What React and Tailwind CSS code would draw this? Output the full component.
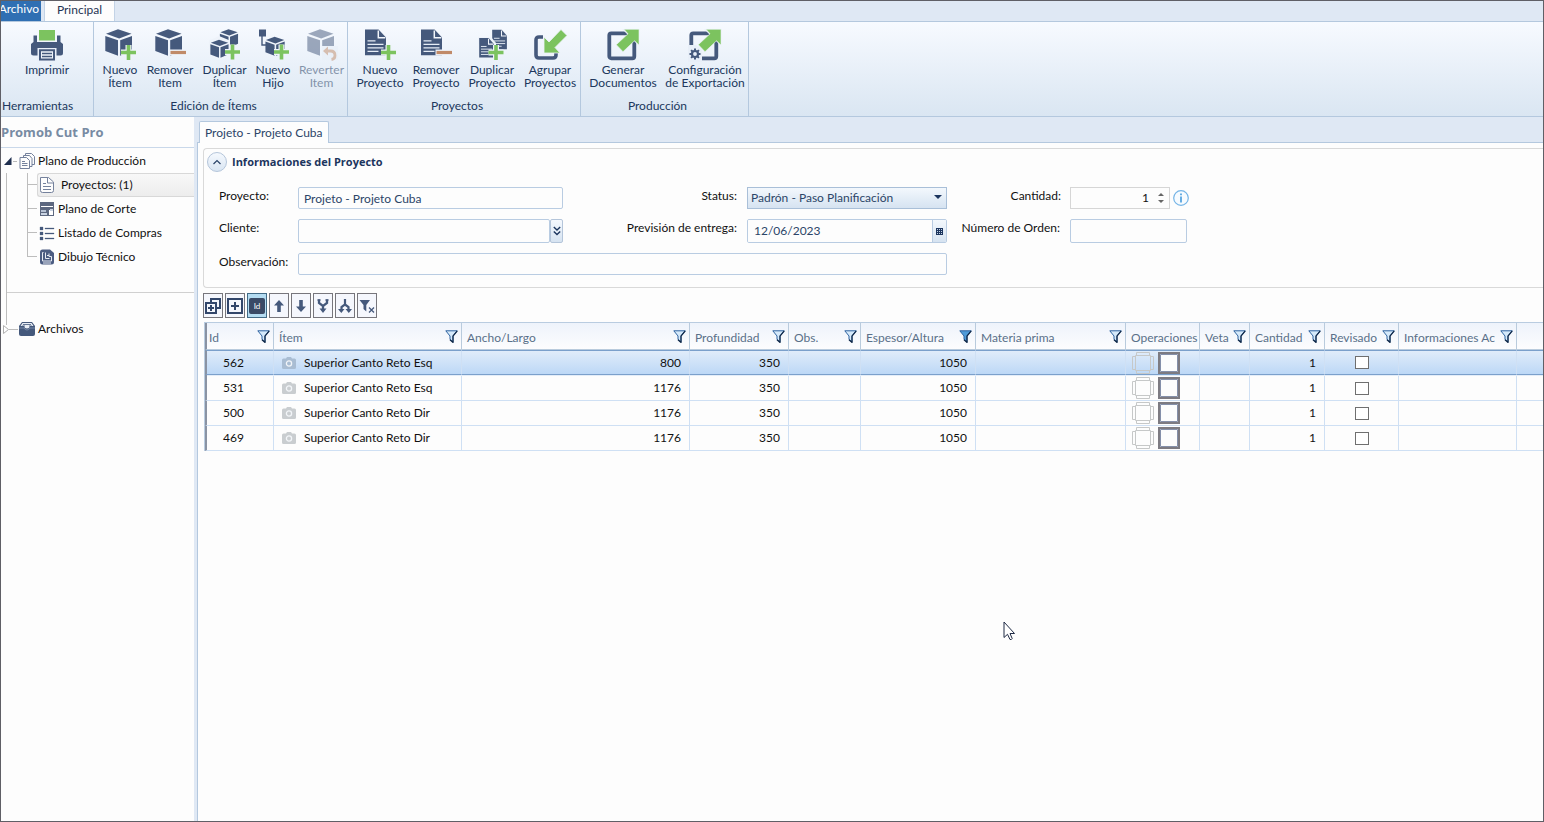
import React from "react";

const NAVY = "#45597c";
const GREEN = "#7cc35f";
const BROWN = "#c08a68";

/* ---------- ribbon drawings ---------- */

function Plus({ x = 24.5, y = 23.5 }) {
  const d = `M${x - 7.5} ${y}h15M${x} ${y - 7.5}v15`;
  return (
    <>
      <path d={d} stroke="#eef3fa" strokeWidth="6" fill="none" />
      <path d={d} stroke={GREEN} strokeWidth="3.6" fill="none" />
    </>
  );
}

function Minus() {
  return (
    <>
      <path d="M15.5 23.5h17" stroke="#eef3fa" strokeWidth="6" />
      <path d="M16.5 23.5h15.5" stroke={BROWN} strokeWidth="3.2" />
    </>
  );
}

function Cube({ transform }) {
  return (
    <g transform={transform} fill={NAVY}>
      <path d="M2 4.8 14 .3l13.5 4.5L15.2 9.6z" />
      <path d="M1.3 7 14 11.3v15.4L1.3 21.9z" />
      <path d="M16.2 11.3 28 7v14.7l-11.8 5z" />
    </g>
  );
}

function Sheet({ transform }) {
  return (
    <g transform={transform}>
      <path d="M1 .5h13.5L22 8.5v17.7H1z" fill={NAVY} />
      <path d="M14.3 1.5v7.3h7" fill="none" stroke="#f2f6fb" strokeWidth="1.5" />
      <path d="M3.5 11.8h8M3.5 15.3h16M3.5 18.8h16M3.5 22.3h11" stroke="#e6edf6" strokeWidth="1.3" />
    </g>
  );
}

const outArrow = <path d="M17 .3h15v15.700l-4.500-4.200L16 22.700 9.300 15.700 21 4.800z" fill={GREEN} stroke="#eef3fa" strokeWidth=".6" />;

const drawings = {
  print: (
    <>
      <path d="M8 1h16v10.5H8z" fill={GREEN} />
      <path d="M2.5 6.5H6v6.5h20V6.5h3.5V13l2.5 2v9q0 2.5-2.5 2.5h-27Q0 26.500 0 24v-9l2.500-2z" fill={NAVY} />
      <path d="M6.500 19h19v13h-19z" fill="#e8eff8" />
      <path d="M9 21.300h14v9.200H9z" fill="#eef3fa" stroke={NAVY} strokeWidth="2" />
      <path d="M11 24.500h10M11 27.500h10" stroke={NAVY} strokeWidth="1.300" />
    </>
  ),
  itemNew: (<><Cube /><Plus /></>),
  itemRemove: (<><Cube /><Minus /></>),
  itemDup: (
    <>
      <Cube transform="translate(10 0) scale(.68)" />
      <path d="M0 11.500 10 7l11 4.500V28L10 31 0 27z" fill="#eef3fa" />
      <Cube transform="translate(.5 10.500) scale(.68)" />
      <Plus x={23.500} y={23} />
    </>
  ),
  itemChild: (
    <>
      <path d="M2 .5h7v7H2z" fill={NAVY} />
      <path d="M5 7v9h5" fill="none" stroke={NAVY} strokeWidth="1.400" />
      <Cube transform="translate(7.500 7.500) scale(.72)" />
      <Plus x={24.500} y={23} />
    </>
  ),
  itemRevert: (
    <>
      <Cube />
      <path d="M16 17h16v14H16z" fill="#e8eff8" />
      <path d="M20 22h4.500q4.500 0 4.500 4.500 0 3.500-3.500 4" fill="none" stroke={BROWN} strokeWidth="2.800" />
      <path d="m22 17.500-5 4.500 5 4.500z" fill={BROWN} />
    </>
  ),
  projNew: (<><Sheet /><Plus /></>),
  projRemove: (<><Sheet /><Minus /></>),
  projDup: (
    <>
      <Sheet transform="translate(15.500 .3) scale(.7 .76)" />
      <path d="M2 8h13l5 6v15H2z" fill="#eef3fa" />
      <Sheet transform="translate(2.500 8.500) scale(.7 .76)" />
      <Plus x={20} y={23.500} />
    </>
  ),
  projGroup: (
    <>
      <path d="M9 8H5Q2 8 2 11v15q0 3 3 3h14q3 0 3-3v-4" fill="none" stroke={NAVY} strokeWidth="3.600" />
      <path d="m10 8 5 5L27 .5l6 6-12 12 5 5.500H10z" fill={GREEN} stroke="#eef3fa" strokeWidth=".8" />
    </>
  ),
  generate: (
    <>
      <rect x="2.300" y="4.300" width="25" height="25" rx="2" fill="none" stroke={NAVY} strokeWidth="3.800" />
      <path d="M15 0h18v18z" fill="#eef3fa" />
      {outArrow}
    </>
  ),
  exportCfg: (
    <>
      <rect x="2.300" y="4.300" width="25" height="25" rx="2" fill="none" stroke={NAVY} strokeWidth="3.800" />
      <path d="M15 0h18v18z" fill="#eef3fa" />
      <path d="M-1 16h8l6 5v12H-1z" fill="#e8eff8" />
      {outArrow}
      <circle cx="6" cy="25" r="3" fill="none" stroke={NAVY} strokeWidth="2.200" />
      <path d="M6 19.500v2M6 28.500v2M.5 25h2M9.500 25h2M2.100 21.100l1.500 1.500M8.400 27.400l1.500 1.500M2.100 28.900l1.500-1.500M8.400 22.600l1.500-1.500" stroke={NAVY} strokeWidth="2" />
    </>
  ),
};

function RibbonButton({ icon, lines, width, disabled }) {
  return (
    <button type="button" disabled={disabled} className={`${width} flex shrink-0 flex-col items-center gap-[2px] leading-[13px] ${disabled ? "opacity-50" : ""}`}>
      <svg viewBox="0 0 32 32" className="h-8 w-8 overflow-visible" aria-hidden="true">{drawings[icon]}</svg>
      <span className="whitespace-nowrap">
        {lines.map((l) => <span key={l} className="block">{l}</span>)}
      </span>
    </button>
  );
}

const ribbon = [
  { name: "Herramientas", width: "w-[93px]", pad: "", label: "pl-px text-left", items: [{ icon: "print", lines: ["Imprimir"], width: "w-[92px]" }] },
  {
    name: "Edición de Ítems", width: "w-[254px]", pad: "pl-1", label: "pr-[14px] text-center",
    items: [
      { icon: "itemNew", lines: ["Nuevo", "Ítem"], width: "w-[44px]" },
      { icon: "itemRemove", lines: ["Remover", "Item"], width: "w-[56px]" },
      { icon: "itemDup", lines: ["Duplicar", "Ítem"], width: "w-[53px]" },
      { icon: "itemChild", lines: ["Nuevo", "Hijo"], width: "w-[44px]" },
      { icon: "itemRevert", lines: ["Reverter", "Item"], width: "w-[53px]", disabled: true },
    ],
  },
  {
    name: "Proyectos", width: "w-[233px]", pad: "pl-1", label: "pr-[14px] text-center",
    items: [
      { icon: "projNew", lines: ["Nuevo", "Proyecto"], width: "w-[56px]" },
      { icon: "projRemove", lines: ["Remover", "Proyecto"], width: "w-[56px]" },
      { icon: "projDup", lines: ["Duplicar", "Proyecto"], width: "w-[56px]" },
      { icon: "projGroup", lines: ["Agrupar", "Proyectos"], width: "w-[60px]" },
    ],
  },
  {
    name: "Producción", width: "w-[168px]", pad: "pl-1", label: "pr-[14px] text-center",
    items: [
      { icon: "generate", lines: ["Generar", "Documentos"], width: "w-[76px]" },
      { icon: "exportCfg", lines: ["Configuración", "de Exportación"], width: "w-[88px]" },
    ],
  },
];

function Ribbon() {
  return (
    <header>
      <nav className="flex h-[20px] bg-[#dfe8f4] leading-4">
        <button type="button" className="flex w-[40px] justify-end overflow-hidden bg-[#2f6fb3] pr-[2px] text-white">Archivo</button>
        <button type="button" className="ml-[3px] w-[71px] border-x border-[#c3d3e6] bg-[#fdfdfd] pb-[3px] text-[#1f3352]">Principal</button>
      </nav>
      <div className="flex h-[96px] border-y border-[#b4c8de] bg-linear-to-b from-[#f7faff] to-[#dae6f2] text-[#20375c]">
        {ribbon.map((g) => (
          <section key={g.name} className={`${g.width} flex shrink-0 flex-col border-r border-[#b4c8de] pt-[7px]`}>
            <div className={`${g.pad} flex h-[69px] items-start`}>{g.items.map((b) => <RibbonButton key={b.icon} {...b} />)}</div>
            <h2 className={`${g.label} leading-4`}>{g.name}</h2>
          </section>
        ))}
      </div>
    </header>
  );
}

/* ---------- navigation tree ---------- */

const treeIcons = {
  stack: (
    <g fill="#fdfdfd" stroke="#74819c" strokeWidth="1">
      <path d="M6.500.5h6l3 3v8h-9z" />
      <path d="M4.500 2.500h6l2.500 3v8H4.500z" />
      <path d="M1 4.500h6.500l3 3v8H1z" />
      <path d="M3 8.500h3M3 10.500h5.500M3 12.500h5.500" />
    </g>
  ),
  sheet: (
    <g fill="#fdfdfd" stroke="#74819c" strokeWidth="1">
      <path d="M1.500.5h8l5 4.500v8.500q0 2-2 2h-9q-2 0-2-2z" />
      <path d="M8.500.5V6h6M4 6.500h3M4 9.500h8M4 12.500h8" />
    </g>
  ),
  cut: (
    <>
      <path d="M1 1h14v14H1z" fill="#5d6880" />
      <path d="M2 5h12v1H2zM8 9h6v5h-4V9z" fill="#fff" />
      <path d="M2 9h5v2H2z" fill="#b7c2d4" />
      <path d="M2 12h6v2H2zM11 8h3v2h-3z" fill="#c9d3e2" />
      <path d="M9 8v6" stroke="#5d6880" />
    </>
  ),
  list: <path d="M1 2h3v3H1zM1 7h3v3H1zM1 12h3v3H1zM6 3h9v1H6zM6 8h9v1H6zM6 13h9v1H6z" fill="#45597c" stroke="#45597c" strokeWidth=".3" />,
  draw: (
    <>
      <path d="M1 3q0-2.500 2.500-2.500H11L15 4v9q0 2.500-2.500 2.500h-9Q1 15.500 1 13z" fill="#4c5d82" />
      <path d="M4.500 3.500h-1v8.500h9V7.500H10V4.500M6.500 3.500v6h4M8 6.500h2" fill="none" stroke="#e6ebf3" />
      <path d="M4 14h8" stroke="#e6ebf3" />
    </>
  ),
  archive: (
    <>
      <path d="M3 1h10l3 4v8q0 2-2 2H2q-2 0-2-2V5z" fill="#45597c" />
      <path d="M3.500 2h9l2 3H11q-.5 2.500-3 2.500T5 5H1.500z" fill="#e9eef5" />
      <path d="M4 3.500h8M3 5h3M10 5h3" stroke="#45597c" strokeWidth=".8" />
      <path d="M0 7h5q1 2 3 2t3-2h5" fill="none" stroke="#7f92ae" strokeWidth=".8" />
    </>
  ),
};

function TreeIcon({ name }) {
  return <svg viewBox="0 0 16 16" className="h-4 w-4 shrink-0" aria-hidden="true">{treeIcons[name]}</svg>;
}

const children = [
  { icon: "sheet", text: "Proyectos: (1)", active: true },
  { icon: "cut", text: "Plano de Corte" },
  { icon: "list", text: "Listado de Compras" },
  { icon: "draw", text: "Dibujo Técnico" },
];

function Sidebar() {
  return (
    <aside className="w-[193px] shrink-0 overflow-hidden text-[#111]">
      <h1 className="border-b border-[#c9d8ea] py-[5px] font-['Open_Sans'] text-[13px] leading-5 font-bold text-[#788ba3]">Promob Cut Pro</h1>
      <ul className="pt-px">
        <li>
          <a href="#plano" className="flex h-6 items-center">
            <svg viewBox="0 0 18 12" className="h-3 w-[18px]" aria-hidden="true">
              <path d="M10.500 2v8H3z" fill="#1f2f4f" /><path d="M12 6.500h4" stroke="#b9b9b9" />
            </svg>
            <TreeIcon name="stack" />
            <span className="pl-[3px]">Plano de Producción</span>
          </a>
          <div className="ml-[5px] border-l border-[#bdbdbd]">
            <ul className="pl-[20px]">
              {children.map((c, i) => (
                <li key={c.text} className="flex h-6">
                  <span className="flex w-[10px] shrink-0 flex-col">
                    <span className="h-3 border-b border-l border-[#bdbdbd]" />
                    <span className={`h-3 ${i < children.length - 1 ? "border-l border-[#bdbdbd]" : ""}`} />
                  </span>
                  <a href="#item" className={`flex grow items-center rounded-l-[3px] pl-px ${c.active ? "border border-r-0 border-[#d8d8d8] bg-linear-to-b from-[#f8f8f8] to-[#ededed]" : "ml-px"}`}>
                    <TreeIcon name={c.icon} />
                    <span className={c.active ? "pl-[6px]" : "pl-[3px]"}>{c.text}</span>
                  </a>
                </li>
              ))}
            </ul>
            <div className="mt-[23px] h-[25px] border-t border-[#d0d0d0]" />
          </div>
        </li>
        <li>
          <a href="#archivos" className="flex h-6 items-center">
            <svg viewBox="0 0 18 24" className="h-6 w-[18px]" aria-hidden="true">
              <path d="M5.500 0v8" stroke="#bdbdbd" /><path d="M2.500 8.500v8L7.500 12.500z" fill="#fff" stroke="#b0b0b0" /><path d="M8 12.500h9" stroke="#bdbdbd" />
            </svg>
            <TreeIcon name="archive" />
            <span className="pl-[3px]">Archivos</span>
          </a>
        </li>
      </ul>
    </aside>
  );
}

/* ---------- project form ---------- */

const fieldBorder = "rounded-[2px] border border-[#b9cce2] bg-[#fdfdfd] text-[#2c4568] outline-none";

function ProjectForm() {
  return (
    <section className="ml-[5px] mt-[5px] rounded-l-[4px] border border-r-0 border-[#d9d9d9] pb-3 pt-[3px]">
      <div className="flex items-center gap-[5px] pl-[3px]">
        <button type="button" aria-label="Contraer" className="flex h-5 w-5 items-center justify-center rounded-full border border-[#b4c5da] bg-linear-to-b from-[#f5f9fe] to-[#d9e5f2]">
          <svg viewBox="0 0 10 6" className="h-[6px] w-[10px]" aria-hidden="true"><path d="m1.500 5 3.500-3.500L8.500 5" fill="none" stroke="#2b4468" strokeWidth="1.200" /></svg>
        </button>
        <h2 className="font-['Open_Sans'] text-[11px] leading-5 font-bold text-[#1c355e]">Informaciones del Proyecto</h2>
      </div>
      <form className="grid grid-cols-[79px_265px_184px_200px_123px_120px] items-start gap-y-[10px] pl-[15px] pt-[15px] leading-[18px] text-[#111]">
        <label htmlFor="proyecto">Proyecto:</label>
        <input id="proyecto" defaultValue="Projeto - Projeto Cuba" className={`${fieldBorder} h-[22px] w-full px-[5px]`} />
        <label htmlFor="status" className="pr-[10px] text-right">Status:</label>
        <div className="relative">
          <select id="status" className="h-[22px] w-full appearance-none border border-[#a9bfd8] bg-linear-to-b from-[#f3f8fd] to-[#d6e3f1] px-[3px] text-[#2c4568] outline-none">
            <option>Padrón - Paso Planificación</option>
          </select>
          <svg viewBox="0 0 8 4" className="pointer-events-none absolute right-[5px] top-2 h-1 w-2" aria-hidden="true"><path d="M0 0h8L4 4z" fill="#1c355e" /></svg>
        </div>
        <label htmlFor="cantidad" className="pr-[9px] text-right">Cantidad:</label>
        <div className="flex items-center gap-[3px]">
          <div className="flex h-[22px] w-[100px] items-center border border-[#d6d6d6] pr-[5px]">
            <input id="cantidad" defaultValue="1" className="w-full min-w-0 bg-transparent pr-[9px] text-right outline-none" />
            <span className="flex flex-col gap-[4px]">
              <button type="button" aria-label="Aumentar"><svg viewBox="0 0 6 3" className="h-[3px] w-[6px]"><path d="M0 3h6L3 0z" fill="#666" /></svg></button>
              <button type="button" aria-label="Disminuir"><svg viewBox="0 0 6 3" className="h-[3px] w-[6px]"><path d="M0 0h6L3 3z" fill="#666" /></svg></button>
            </span>
          </div>
          <svg viewBox="0 0 16 16" className="h-4 w-4 shrink-0" aria-hidden="true">
            <circle cx="8" cy="8" r="7.300" fill="#f6fbff" stroke="#74b4e6" strokeWidth="1.200" />
            <path d="M8 3.500v1.800M8 6.500V12.500" stroke="#57a5e0" strokeWidth="1.800" />
          </svg>
        </div>

        <label htmlFor="cliente">Cliente:</label>
        <div className="flex">
          <input id="cliente" className={`${fieldBorder} h-6 min-w-0 grow px-[5px]`} />
          <button type="button" aria-label="Buscar cliente" className="flex h-6 w-[13px] items-center justify-center rounded-[2px] border border-[#b4c5da] bg-linear-to-b from-[#f5f9fe] to-[#d6e3f1]">
            <svg viewBox="0 0 8 10" className="h-[10px] w-2" aria-hidden="true"><path d="m.8 1 3.200 3 3.200-3M.8 5.500l3.200 3 3.200-3" fill="none" stroke="#1c355e" strokeWidth="1.400" /></svg>
          </button>
        </div>
        <label htmlFor="prevision" className="pr-[10px] text-right">Previsión de entrega:</label>
        <div className="flex h-6 overflow-hidden rounded-[2px] border border-[#b9cce2]">
          <input id="prevision" defaultValue="12/06/2023" className="min-w-0 grow bg-[#fdfdfd] px-[6px] text-[#2c4568] outline-none" />
          <button type="button" aria-label="Calendario" className="flex w-[14px] items-center justify-center border-l border-[#b9cce2] bg-linear-to-b from-[#f3f8fd] to-[#d6e3f1]">
            <svg viewBox="0 0 7 7" className="h-[7px] w-[7px]" aria-hidden="true"><path d="M0 0h7v7H0z" fill="#1c355e" /><path d="M1 1h1v1H1zM3 1h1v1H3zM5 1h1v1H5zM1 3h1v1H1zM3 3h1v1H3zM5 3h1v1H5zM1 5h1v1H1zM3 5h1v1H3zM5 5h1v1H5z" fill="#c3d2e5" /></svg>
          </button>
        </div>
        <label htmlFor="orden" className="whitespace-nowrap pr-[10px] text-right">Número de Orden:</label>
        <input id="orden" className={`${fieldBorder} h-6 w-[117px] px-[5px]`} />

        <label htmlFor="observacion">Observación:</label>
        <input id="observacion" className={`${fieldBorder} col-span-3 h-[22px] w-full px-[5px]`} />
      </form>
    </section>
  );
}

/* ---------- grid toolbar ---------- */

const tools = [
  ["Expandir todo", <g fill="#f5f7fc" stroke="#33476b" strokeWidth="2"><path d="M6 1h9v9H6z" /><path d="M1 5h10v10H1z" /><path d="M6 7v6M3 10h6" /></g>],
  ["Expandir", <g fill="none" stroke="#33476b" strokeWidth="2"><path d="M1 1h14v14H1zM8 4v8M4 8h8" /></g>],
  ["Mostrar Id", null],
  ["Subir", <path d="m8 2 5 5.500H9.800V14H6.200V7.500H3z" fill={NAVY} />],
  ["Bajar", <path d="m8 14 5-5.500H9.800V2H6.200v6.500H3z" fill={NAVY} />],
  ["Unir", <g fill="none" stroke={NAVY} strokeWidth="2.300"><path d="M4 1.500V5l4 3 4-3V1.500M8 7v6" /><path d="M4.500 10.500h7L8 15z" fill={NAVY} stroke="none" /><path d="M2.500 2h3M10.500 2h3" strokeWidth="1.500" /></g>],
  ["Separar", <g fill="none" stroke={NAVY} strokeWidth="2.200"><path d="M8 1v5.500L4.500 9v3M8 6.500 11.500 9v3" /><path d="M1 11h6.500l-3.200 4zM8.500 11H15l-3.200 4z" fill={NAVY} stroke="none" /></g>],
  ["Quitar filtros", <><path d="M.5 2h10.500L7.300 7v6.500L4.500 11V7z" fill={NAVY} /><path d="m10 9.500 5 5M15 9.500l-5 5" stroke={NAVY} strokeWidth="1.300" /></>],
];

function GridToolbar() {
  return (
    <div className="ml-[5px] mt-[5px] flex gap-[2px]">
      {tools.map(([label, drawing]) => (
        <button key={label} type="button" aria-label={label} className={`flex h-[25px] w-[20px] items-center justify-center border ${drawing ? "border-[#77767c] bg-[#f5f7fd]" : "border-[#416a86] bg-[#b4dcf2]"}`}>
          {drawing ? (
            <svg viewBox="0 0 16 16" className="h-4 w-4 shrink-0" aria-hidden="true">{drawing}</svg>
          ) : (
            <span className="h-4 w-4 shrink-0 rounded-[2px] bg-[#3a4a66] text-[8px] leading-4 text-white">Id</span>
          )}
        </button>
      ))}
    </div>
  );
}

/* ---------- items table ---------- */

const columns = [
  { title: "Id", width: "w-[70px]", filter: true },
  { title: "Ítem", width: "w-[188px]", filter: true },
  { title: "Ancho/Largo", width: "w-[228px]", filter: true },
  { title: "Profundidad", width: "w-[99px]", filter: true },
  { title: "Obs.", width: "w-[72px]", filter: true },
  { title: "Espesor/Altura", width: "w-[115px]", filter: true, applied: true },
  { title: "Materia prima", width: "w-[150px]", filter: true },
  { title: "Operaciones", width: "w-[74px]" },
  { title: "Veta", width: "w-[50px]", filter: true },
  { title: "Cantidad", width: "w-[75px]", filter: true },
  { title: "Revisado", width: "w-[74px]", filter: true },
  { title: "Informaciones Ac", width: "w-[118px]", filter: true },
  { title: "", width: "w-auto" },
];

const rows = [
  { id: 562, item: "Superior Canto Reto Esq", ancho: 800 },
  { id: 531, item: "Superior Canto Reto Esq", ancho: 1176 },
  { id: 500, item: "Superior Canto Reto Dir", ancho: 1176 },
  { id: 469, item: "Superior Canto Reto Dir", ancho: 1176 },
];

function Funnel({ applied }) {
  return (
    <svg viewBox="0 0 13 13" className="h-[13px] w-[13px]" aria-hidden="true">
      <path d="M.8.800h11.400L8 6v6L5 9.500V6z" fill={applied ? "#4f9bd8" : "#d5e9fa"} stroke="#2d62a0" strokeWidth="1" />
      <path d="M12.300.800 8 6v6.500L5 9.700" fill="none" stroke="#0f2747" strokeWidth="1.200" />
    </svg>
  );
}

function Operations() {
  return (
    <span className="flex gap-[4px] pl-[6px]">
      <svg viewBox="0 0 22 22" className="h-[22px] w-[22px]" fill="none" stroke="#c6c8c8" aria-hidden="true">
        <path d="M4.500.5h13v3h-13zM4.500 18.500h13v3h-13zM.5 4.500h3v13h-3zM18.500 4.500h3v13h-3zM3.500 3.500h15v15h-15z" />
      </svg>
      <svg viewBox="0 0 22 22" className="h-[22px] w-[22px]" aria-hidden="true">
        <path d="M1 1h20v20H1z" fill="#fdfdfd" stroke="#7d7b82" strokeWidth="2" />
        <path d="M2.500 2.500h17v17h-17z" fill="none" stroke="#8590aa" />
      </svg>
    </span>
  );
}

function ItemsTable() {
  const num = "pr-[8px] text-right";
  return (
    <div className="ml-[6px] mt-1 overflow-hidden border-l border-t border-[#b9cce0]">
      <table className="w-full table-fixed border-separate border-spacing-0 text-[#111]">
        <thead>
          <tr className="h-[27px] bg-linear-to-b from-[#eef3fb] to-[#fdfdfe]">
            {columns.map((c, i) => (
              <th key={i} scope="col" className={`${i === 0 ? "w-[69px] border-l-2 border-l-[#8a93a3] pl-[2px]" : `${c.width} pl-[5px]`} overflow-hidden border-b border-r border-[#b9cbdd] p-0 text-left font-normal whitespace-nowrap text-[#5a7089] last:border-r-0`}>
                <span className="flex items-center justify-between pr-[3px]">
                  <span className="pt-[3px]">{c.title}</span>
                  {c.filter && <button type="button" aria-label={`Filtrar ${c.title}`} className="shrink-0"><Funnel applied={c.applied} /></button>}
                </span>
              </th>
            ))}
          </tr>
        </thead>
        <tbody>
          {rows.map((r, i) => {
            const sel = i === 0;
            const row = sel
              ? "h-[25px] [&>td]:border-y [&>td]:border-y-[#7ba0cb] bg-linear-to-b from-[#e2edfa] to-[#bbd7f6]"
              : "h-[25px] [&>td]:border-b [&>td]:border-b-[#cfe0f4]";
            return (
              <React.Fragment key={r.id}>
                <tr className={`${row} [&>td]:border-r [&>td]:border-r-[#cfe0f4] [&>td]:p-0 [&>td:last-child]:border-r-0`}>
                  <td className="border-l-2 border-l-[#8a93a3]"><span className="pl-[16px]">{r.id}</span></td>
                  <td>
                    <span className="flex items-center pl-[8px]">
                      <svg viewBox="0 0 14 12" className={`h-3 w-[14px] ${sel ? "text-[#a9bdd3]" : "text-[#c9cdd0]"}`} aria-hidden="true">
                        <path d="M4 1.500 5 0h4l1 1.500h2.500Q14 1.500 14 3v7.500q0 1.500-1.500 1.500h-11Q0 12 0 10.500V3q0-1.500 1.500-1.500z" fill="currentColor" />
                        <circle cx="7" cy="6.500" r="2.600" fill="none" stroke="#f2f5f8" strokeWidth="1.300" />
                      </svg>
                      <span className="pl-[8px]">{r.item}</span>
                    </span>
                  </td>
                  <td><div className={num}>{r.ancho}</div></td>
                  <td><div className={num}>350</div></td>
                  <td />
                  <td><div className={num}>1050</div></td>
                  <td />
                  <td><Operations /></td>
                  <td />
                  <td><div className={num}>1</div></td>
                  <td><input type="checkbox" aria-label={`Revisado ${r.id}`} className="mx-auto block h-[13px] w-[14px] appearance-none border border-[#6f6f6f] bg-white" /></td>
                  <td />
                  <td />
                </tr>
                {sel && (
                  <tr aria-hidden="true"><td colSpan={columns.length} className="h-px border-l-2 border-l-[#8a93a3] bg-[#e4edf8] p-0" /></tr>
                )}
              </React.Fragment>
            );
          })}
        </tbody>
      </table>
    </div>
  );
}

export default function App() {
  return (
    <div className="relative flex min-h-screen flex-col border border-[#5f5f66] bg-[#fdfdfd] font-['Lato','Open_Sans',sans-serif] text-[12px] leading-[18px]">
      <Ribbon />
      <div className="flex grow">
        <Sidebar />
        <main className="flex min-w-0 grow flex-col border-l-[3px] border-[#dfe8f4]">
          <div className="flex h-[26px] items-end border-b border-[#b4c8de] bg-[#dfe8f4]">
            <button type="button" className="-mb-px ml-[2px] h-[22px] rounded-t-[2px] border border-b-0 border-[#b4c8de] bg-[#fdfdfd] px-[5px] text-[#2c4568]">Projeto - Projeto Cuba</button>
          </div>
          <div className="grow border-l border-[#b4c8de]">
            <ProjectForm />
            <GridToolbar />
            <ItemsTable />
          </div>
        </main>
      </div>
      <svg viewBox="0 0 12 20" className="pointer-events-none absolute left-[1002px] top-[620px] h-5 w-3" aria-hidden="true">
        <path d="M1 1v15.500l3.500-3.200L7 18.500q1.500.5 2.200-1L7 12.500h4.500z" fill="#fff" stroke="#1f2a44" />
      </svg>
    </div>
  );
}
